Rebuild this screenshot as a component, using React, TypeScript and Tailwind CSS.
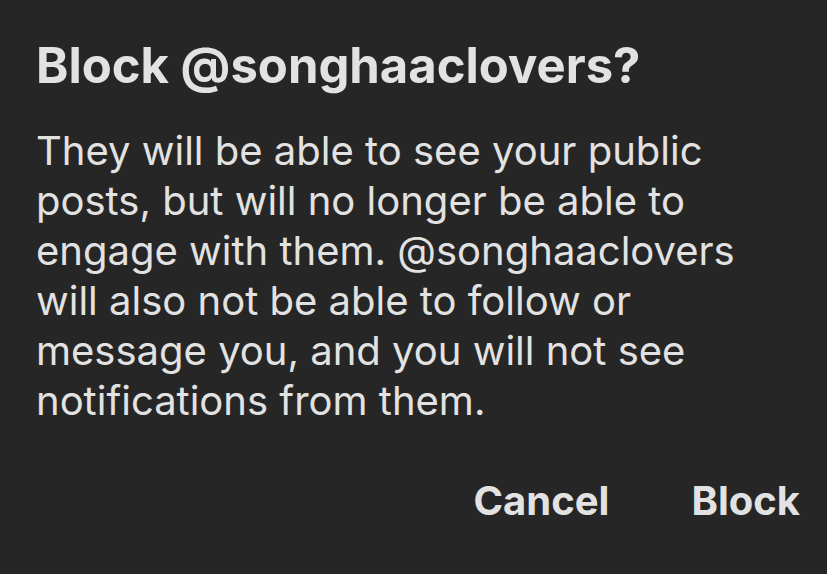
export default function App() {
  return (
    <div className="w-[827px] h-[574px] bg-[#262626] text-[#e2e2e2] overflow-hidden" style={{ fontFamily: "Inter, 'Noto Sans', sans-serif" }}>
      <div className="pl-[36px] pr-[27px] pt-[36px]">
        <h1 className="text-[49px] font-bold leading-[60px]">Block @songhaaclovers?</h1>
        <p className="mt-[30px] text-[40px] leading-[50px] font-normal w-[760px]">
          They will be able to see your public posts, but will no longer be able to engage with them. @songhaaclovers will also not be able to follow or message you, and you will not see notifications from them.
        </p>
        <div className="mt-[50px] flex justify-end gap-[82px] text-[40px] leading-[50px] font-bold">
          <span>Cancel</span>
          <span>Block</span>
        </div>
      </div>
    </div>
  );
}
